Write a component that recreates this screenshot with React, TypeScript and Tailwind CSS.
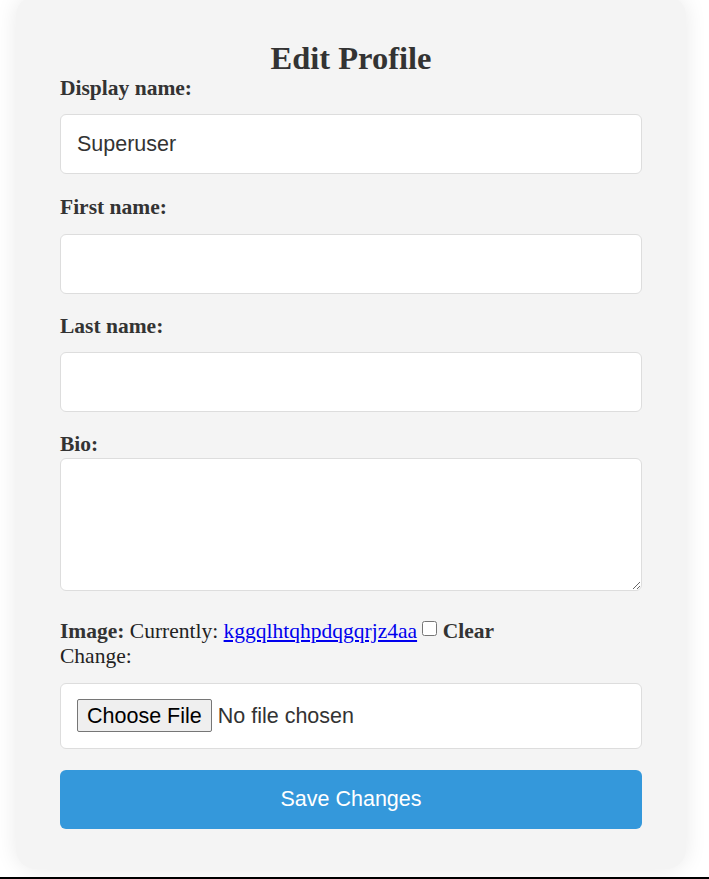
import { useState } from 'react';

const serif = { fontFamily: '"Liberation Serif", "Times New Roman", serif' };
const sans = { fontFamily: '"Liberation Sans", Arial, sans-serif' };

const Label = ({ text, className }: { text: string; className: string }) => (
  <label className={`block text-[21.5px] leading-[23px] font-bold text-[#333] ${className}`} style={serif}>
    {text}
  </label>
);

const Field = ({ value, onChange }: { value: string; onChange: (v: string) => void }) => (
  <input
    type="text"
    value={value}
    onChange={(e) => onChange(e.target.value)}
    className="block w-full h-[60px] px-[16px] bg-white border border-[#dddddd] rounded-[6px] text-[21.5px] text-[#333] outline-none"
    style={sans}
  />
);

export default function App() {
  const [displayName, setDisplayName] = useState('Superuser');
  const [firstName, setFirstName] = useState('');
  const [lastName, setLastName] = useState('');
  const [bio, setBio] = useState('');

  return (
    <div className="h-[879px] bg-white border-b-2 border-black overflow-hidden">
      <div className="ml-[16px] w-[670px] -mt-[4px] bg-[#f4f4f4] rounded-[20px] shadow-[0_0_22px_rgba(0,0,0,0.09)] px-[44px] pt-[45px] pb-[40px]">
        <h2 className="text-center text-[32.5px] leading-[34px] font-bold text-[#333]" style={serif}>
          Edit Profile
        </h2>

        <Label text="Display name:" className="mt-[2px] mb-[14px]" />
        <Field value={displayName} onChange={setDisplayName} />

        <Label text="First name:" className="mt-[22px] mb-[15px]" />
        <Field value={firstName} onChange={setFirstName} />

        <Label text="Last name:" className="mt-[21px] mb-[14px]" />
        <Field value={lastName} onChange={setLastName} />

        <Label text="Bio:" className="mt-[21px] mb-[2px]" />
        <textarea
          value={bio}
          onChange={(e) => setBio(e.target.value)}
          className="block w-full h-[133px] p-[16px] bg-white border border-[#dddddd] rounded-[6px] text-[21.5px] text-[#333] outline-none"
          style={sans}
        />

        <div className="mt-[28px] text-[21.5px] leading-[25px] text-[#222]" style={serif}>
          <div>
            <b className="text-[#333]">Image:</b> Currently:{' '}
            <a href="#" className="text-[#0000ee] underline">kggqlhtqhpdqgqrjz4aa</a>{' '}
            <input type="checkbox" className="w-[15px] h-[15px] align-[2px] accent-[#555]" />{' '}
            <b className="text-[#333]">Clear</b>
          </div>
          <div>Change:</div>
        </div>

        <div className="mt-[14px] h-[66px] flex items-center px-[16px] bg-white border border-[#dddddd] rounded-[6px]">
          <input
            type="file"
            className="text-[21.5px] text-[#333] file:h-[33px] file:px-[9px] file:mr-[6px] file:bg-[#efefef] file:text-black file:border file:border-[#767676] file:rounded-[2px] file:text-[21.5px]"
            style={sans}
          />
        </div>

        <button
          className="mt-[21px] w-full h-[59px] bg-[#3498db] rounded-[6px] text-white text-[21.5px]"
          style={sans}
        >
          Save Changes
        </button>
      </div>
    </div>
  );
}
